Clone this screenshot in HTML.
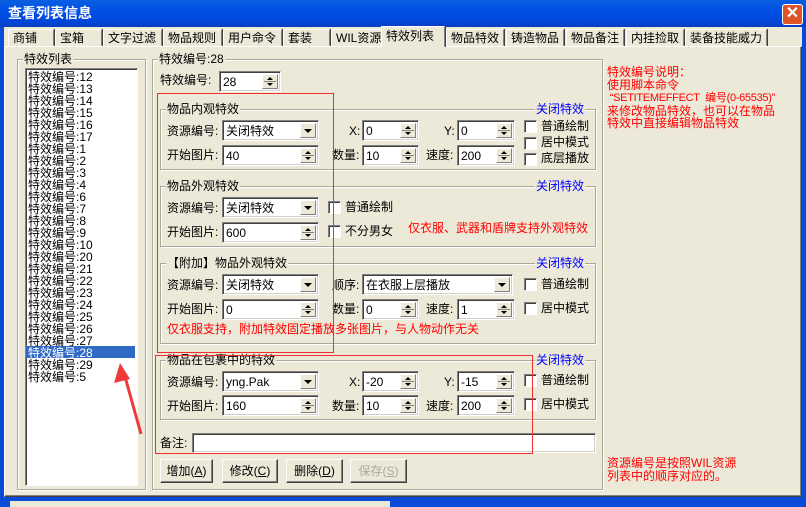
<!DOCTYPE html><html><head><meta charset="utf-8"><style>
*{box-sizing:border-box;margin:0;padding:0}
body{width:806px;height:507px;overflow:hidden;background:#ece9d8;position:relative;font:12px/14px "Liberation Sans","Noto Sans CJK SC",sans-serif;color:#000}
.a{position:absolute;white-space:nowrap}
.g{position:absolute;border:1px solid #aca899;box-shadow:1px 1px 0 #fff inset,1px 1px 0 #fff}
.lg{position:absolute;top:-8px;background:#ece9d8;padding:0 1px;white-space:nowrap}
.e{position:absolute;background:#fff;border:1px solid;border-color:#808080 #fff #fff #808080;box-shadow:inset 1px 1px 0 #404040,inset -1px -1px 0 #d4d0c8;height:21px;padding:3px 0 0 3px;white-space:nowrap}
.sp{position:absolute;right:2px;top:2px;width:16px;height:15px;background:#ece9d8;border:1px solid;border-color:#fff #808080 #808080 #fff}
.sp:before{content:"";position:absolute;left:4px;top:2px;border:3px solid transparent;border-bottom:3px solid #000;border-top:0}
.sp:after{content:"";position:absolute;left:4px;top:8px;border:3px solid transparent;border-top:3px solid #000;border-bottom:0}
.sp i{position:absolute;left:1px;right:1px;top:6px;height:1px;background:#808080}
.dd{position:absolute;right:2px;top:2px;width:16px;height:15px;background:#ece9d8;border:1px solid;border-color:#fff #808080 #808080 #fff}
.dd:after{content:"";position:absolute;left:3px;top:5px;border:4px solid transparent;border-top:4px solid #000;border-bottom:0}
.cb{position:absolute;width:13px;height:13px;background:#fff;border:1px solid;border-color:#808080 #fff #fff #808080;box-shadow:inset 1px 1px 0 #404040}
.bl{color:#0000ff}.rd{color:#ff0000}
.bt{position:absolute;height:24px;background:#ece9d8;border:1px solid;border-color:#fff #404040 #404040 #fff;box-shadow:inset -1px -1px 0 #808080;text-align:center;padding-top:4px}
.tab{position:absolute;top:29px;height:17px;border:1px solid;border-color:#fff #808080 transparent #fff;box-shadow:1px 0 0 #404040;padding:1px 0 0 4px;white-space:nowrap}
.li{position:absolute;left:28px;height:12px;line-height:12px}
</style></head><body>
<div class="a" style="left:0;top:0;width:806px;height:27px;background:linear-gradient(#0a5fe0,#0050e8 40%,#0146d8 80%,#0a3fc0)"></div>
<div class="a" style="left:8px;top:5px;color:#fff;font-weight:bold;font-size:14px;line-height:16px">查看列表信息</div>
<div class="a" style="left:782px;top:4px;width:21px;height:21px;background:#e0542a;border:1px solid #fff;border-radius:3px;color:#fff;font-size:16px;line-height:18px;text-align:center;font-weight:bold">✕</div>
<div class="a" style="left:0;top:27px;width:4px;height:480px;background:#0a4ad8"></div>
<div class="a" style="left:802px;top:27px;width:4px;height:480px;background:#0a4ad8"></div>
<div class="a" style="left:4px;top:46px;width:798px;height:451px;border:1px solid;border-color:#fff #404040 #404040 #fff;box-shadow:inset -1px -1px 0 #808080"></div>
<div class="tab" style="left:8px;width:46px">商铺</div>
<div class="tab" style="left:55px;width:47px">宝箱</div>
<div class="tab" style="left:103px;width:59px">文字过滤</div>
<div class="tab" style="left:163px;width:59px">物品规则</div>
<div class="tab" style="left:223px;width:59px">用户命令</div>
<div class="tab" style="left:283px;width:47px">套装</div>
<div class="tab" style="left:331px;width:51px">WIL资源</div>
<div class="tab" style="left:381px;top:26px;height:21px;width:64px;background:#ece9d8;padding-top:2px">特效列表</div>
<div class="tab" style="left:446px;width:58px">物品特效</div>
<div class="tab" style="left:506px;width:58px">铸造物品</div>
<div class="tab" style="left:566px;width:58px">物品备注</div>
<div class="tab" style="left:626px;width:58px">内挂捡取</div>
<div class="tab" style="left:685px;width:82px">装备技能威力</div>
<div class="a" style="left:0;top:497px;width:806px;height:10px;background:#0a4ad8"></div>
<div class="a" style="left:10px;top:501px;width:380px;height:6px;background:#ece9d8"></div>

<div class="g" style="left:17px;top:59px;width:129px;height:431px"><div class="lg" style="left:5px">特效列表</div></div>
<div class="a" style="left:25px;top:68px;width:113px;height:418px;background:#fff;border:1px solid;border-color:#808080 #fff #fff #808080;box-shadow:inset 1px 1px 0 #404040"></div>
<div class="a" style="left:26px;top:346px;width:109px;height:12px;background:#316ac5"></div>
<div class="li" style="top:71px">特效编号:12</div><div class="li" style="top:83px">特效编号:13</div><div class="li" style="top:95px">特效编号:14</div><div class="li" style="top:107px">特效编号:15</div><div class="li" style="top:119px">特效编号:16</div><div class="li" style="top:131px">特效编号:17</div><div class="li" style="top:143px">特效编号:1</div><div class="li" style="top:155px">特效编号:2</div><div class="li" style="top:167px">特效编号:3</div><div class="li" style="top:179px">特效编号:4</div><div class="li" style="top:191px">特效编号:6</div><div class="li" style="top:203px">特效编号:7</div><div class="li" style="top:215px">特效编号:8</div><div class="li" style="top:227px">特效编号:9</div><div class="li" style="top:239px">特效编号:10</div><div class="li" style="top:251px">特效编号:20</div><div class="li" style="top:263px">特效编号:21</div><div class="li" style="top:275px">特效编号:22</div><div class="li" style="top:287px">特效编号:23</div><div class="li" style="top:299px">特效编号:24</div><div class="li" style="top:311px">特效编号:25</div><div class="li" style="top:323px">特效编号:26</div><div class="li" style="top:335px">特效编号:27</div><div class="li" style="top:347px;color:#fff">特效编号:28</div><div class="li" style="top:359px">特效编号:29</div><div class="li" style="top:371px">特效编号:5</div>

<div class="g" style="left:152px;top:59px;width:451px;height:431px"><div class="lg" style="left:5px">特效编号:28</div></div>
<div class="a" style="left:160px;top:73px">特效编号:</div>
<div class="e" style="left:219px;top:71px;width:62px">28<div class="sp"><i></i></div></div>

<div class="g" style="left:160px;top:109px;width:436px;height:61px"><div class="lg" style="left:5px">物品内观特效</div><div class="lg bl" style="left:374px">关闭特效</div></div>
<div class="a" style="left:167px;top:124px">资源编号:</div>
<div class="e" style="left:222px;top:120px;width:97px">关闭特效<div class="dd"></div></div>
<div class="a" style="left:349px;top:124px">X:</div>
<div class="e" style="left:362px;top:120px;width:57px">0<div class="sp"><i></i></div></div>
<div class="a" style="left:444px;top:124px">Y:</div>
<div class="e" style="left:457px;top:120px;width:58px">0<div class="sp"><i></i></div></div>
<div class="cb" style="left:524px;top:120px"></div><div class="a" style="left:541px;top:119px">普通绘制</div>
<div class="a" style="left:167px;top:148px">开始图片:</div>
<div class="e" style="left:222px;top:145px;width:97px">40<div class="sp"><i></i></div></div>
<div class="a" style="left:332px;top:148px">数量:</div>
<div class="e" style="left:362px;top:145px;width:57px">10<div class="sp"><i></i></div></div>
<div class="a" style="left:426px;top:148px">速度:</div>
<div class="e" style="left:457px;top:145px;width:58px">200<div class="sp"><i></i></div></div>
<div class="cb" style="left:524px;top:137px"></div><div class="a" style="left:541px;top:135px">居中模式</div>
<div class="cb" style="left:524px;top:153px"></div><div class="a" style="left:541px;top:151px">底层播放</div>

<div class="g" style="left:160px;top:186px;width:436px;height:61px"><div class="lg" style="left:5px">物品外观特效</div><div class="lg bl" style="left:374px">关闭特效</div></div>
<div class="a" style="left:167px;top:201px">资源编号:</div>
<div class="e" style="left:222px;top:197px;width:97px">关闭特效<div class="dd"></div></div>
<div class="cb" style="left:328px;top:201px"></div><div class="a" style="left:345px;top:200px">普通绘制</div>
<div class="a" style="left:167px;top:225px">开始图片:</div>
<div class="e" style="left:222px;top:222px;width:97px">600<div class="sp"><i></i></div></div>
<div class="cb" style="left:328px;top:225px"></div><div class="a" style="left:345px;top:224px">不分男女</div>
<div class="a rd" style="left:408px;top:221px">仅衣服、武器和盾牌支持外观特效</div>

<div class="g" style="left:160px;top:263px;width:436px;height:81px"><div class="lg" style="left:5px">【附加】物品外观特效</div><div class="lg bl" style="left:374px">关闭特效</div></div>
<div class="a" style="left:167px;top:278px">资源编号:</div>
<div class="e" style="left:222px;top:274px;width:97px">关闭特效<div class="dd"></div></div>
<div class="a" style="left:332px;top:278px">顺序:</div>
<div class="e" style="left:362px;top:274px;width:151px">在衣服上层播放<div class="dd"></div></div>
<div class="cb" style="left:524px;top:278px"></div><div class="a" style="left:541px;top:277px">普通绘制</div>
<div class="a" style="left:167px;top:302px">开始图片:</div>
<div class="e" style="left:222px;top:299px;width:97px">0<div class="sp"><i></i></div></div>
<div class="a" style="left:332px;top:302px">数量:</div>
<div class="e" style="left:362px;top:299px;width:57px">0<div class="sp"><i></i></div></div>
<div class="a" style="left:426px;top:302px">速度:</div>
<div class="e" style="left:457px;top:299px;width:58px">1<div class="sp"><i></i></div></div>
<div class="cb" style="left:524px;top:302px"></div><div class="a" style="left:541px;top:301px">居中模式</div>
<div class="a rd" style="left:167px;top:322px">仅衣服支持，附加特效固定播放多张图片，与人物动作无关</div>

<div class="g" style="left:160px;top:360px;width:436px;height:60px"><div class="lg" style="left:5px">物品在包裹中的特效</div><div class="lg bl" style="left:374px">关闭特效</div></div>
<div class="a" style="left:167px;top:375px">资源编号:</div>
<div class="e" style="left:222px;top:371px;width:97px">yng.Pak<div class="dd"></div></div>
<div class="a" style="left:349px;top:375px">X:</div>
<div class="e" style="left:362px;top:371px;width:57px">-20<div class="sp"><i></i></div></div>
<div class="a" style="left:444px;top:375px">Y:</div>
<div class="e" style="left:457px;top:371px;width:58px">-15<div class="sp"><i></i></div></div>
<div class="cb" style="left:524px;top:374px"></div><div class="a" style="left:541px;top:373px">普通绘制</div>
<div class="a" style="left:167px;top:399px">开始图片:</div>
<div class="e" style="left:222px;top:395px;width:97px">160<div class="sp"><i></i></div></div>
<div class="a" style="left:332px;top:399px">数量:</div>
<div class="e" style="left:362px;top:395px;width:57px">10<div class="sp"><i></i></div></div>
<div class="a" style="left:426px;top:399px">速度:</div>
<div class="e" style="left:457px;top:395px;width:58px">200<div class="sp"><i></i></div></div>
<div class="cb" style="left:524px;top:398px"></div><div class="a" style="left:541px;top:397px">居中模式</div>

<div class="a" style="left:160px;top:436px">备注:</div>
<div class="e" style="left:192px;top:433px;width:404px;height:20px"></div>
<div class="bt" style="left:160px;top:459px;width:53px">增加(<u>A</u>)</div>
<div class="bt" style="left:222px;top:459px;width:56px">修改(<u>C</u>)</div>
<div class="bt" style="left:286px;top:459px;width:57px">删除(<u>D</u>)</div>
<div class="bt" style="left:350px;top:459px;width:57px;color:#aca899">保存(<u>S</u>)</div>

<div class="a rd" style="left:607px;top:66px;line-height:12.5px">特效编号说明：<br>使用脚本命令<br><span style="font-size:11px;letter-spacing:-0.3px">&nbsp;“SETITEMEFFECT&nbsp;&nbsp;编号(0-65535)”</span><br>来修改物品特效，也可以在物品<br>特效中直接编辑物品特效</div>
<div class="a rd" style="left:607px;top:457px;line-height:12.5px">资源编号是按照WIL资源<br>列表中的顺序对应的。</div>

<div class="a" style="left:157px;top:93px;width:177px;height:260px;border:1px solid #f03030"></div>
<div class="a" style="left:155px;top:355px;width:378px;height:99px;border:1px solid #f03030"></div>
<svg class="a" style="left:100px;top:355px" width="60" height="85"><path d="M41 79 L24 18" stroke="#f03a3a" stroke-width="3"/><path d="M20 8 L14 28 L30 24 Z" fill="#f03a3a"/></svg>
</body></html>
